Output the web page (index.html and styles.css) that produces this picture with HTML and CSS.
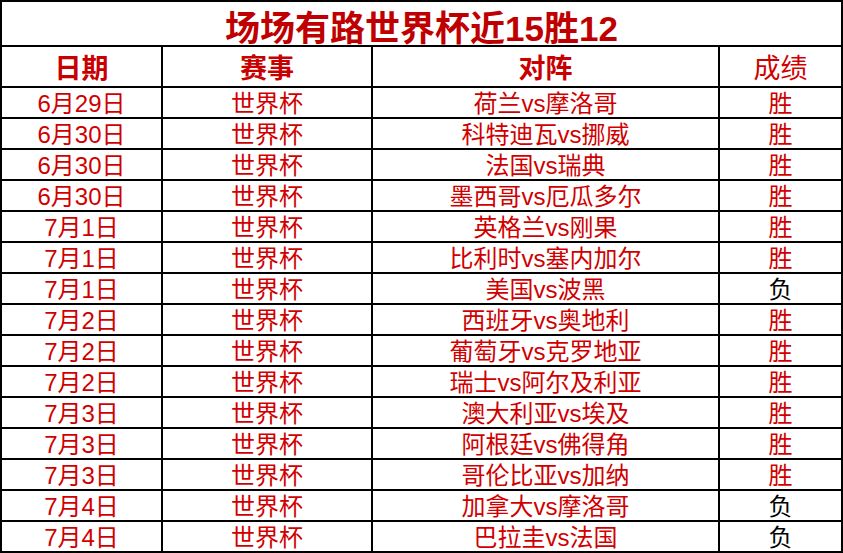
FILE: index.html
```html
<!DOCTYPE html>
<html lang="zh">
<head>
<meta charset="utf-8">
<title>场场有路世界杯近15胜12</title>
<link rel="stylesheet" href="styles.css">
</head>
<body>
<div class="sheet">
  <div class="cell title">场场有路世界杯近15胜12</div>

  <div class="cell head bold">日期</div>
  <div class="cell head bold">赛事</div>
  <div class="cell head bold">对阵</div>
  <div class="cell head">成绩</div>

  <div class="cell">6月29日</div><div class="cell">世界杯</div><div class="cell">荷兰vs摩洛哥</div><div class="cell">胜</div>
  <div class="cell">6月30日</div><div class="cell">世界杯</div><div class="cell">科特迪瓦vs挪威</div><div class="cell">胜</div>
  <div class="cell">6月30日</div><div class="cell">世界杯</div><div class="cell">法国vs瑞典</div><div class="cell">胜</div>
  <div class="cell">6月30日</div><div class="cell">世界杯</div><div class="cell">墨西哥vs厄瓜多尔</div><div class="cell">胜</div>
  <div class="cell">7月1日</div><div class="cell">世界杯</div><div class="cell">英格兰vs刚果</div><div class="cell">胜</div>
  <div class="cell">7月1日</div><div class="cell">世界杯</div><div class="cell">比利时vs塞内加尔</div><div class="cell">胜</div>
  <div class="cell">7月1日</div><div class="cell">世界杯</div><div class="cell">美国vs波黑</div><div class="cell lose">负</div>
  <div class="cell">7月2日</div><div class="cell">世界杯</div><div class="cell">西班牙vs奥地利</div><div class="cell">胜</div>
  <div class="cell">7月2日</div><div class="cell">世界杯</div><div class="cell">葡萄牙vs克罗地亚</div><div class="cell">胜</div>
  <div class="cell">7月2日</div><div class="cell">世界杯</div><div class="cell">瑞士vs阿尔及利亚</div><div class="cell">胜</div>
  <div class="cell">7月3日</div><div class="cell">世界杯</div><div class="cell">澳大利亚vs埃及</div><div class="cell">胜</div>
  <div class="cell">7月3日</div><div class="cell">世界杯</div><div class="cell">阿根廷vs佛得角</div><div class="cell">胜</div>
  <div class="cell">7月3日</div><div class="cell">世界杯</div><div class="cell">哥伦比亚vs加纳</div><div class="cell">胜</div>
  <div class="cell">7月4日</div><div class="cell">世界杯</div><div class="cell">加拿大vs摩洛哥</div><div class="cell lose">负</div>
  <div class="cell">7月4日</div><div class="cell">世界杯</div><div class="cell">巴拉圭vs法国</div><div class="cell lose">负</div>
</div>
</body>
</html>
```

FILE: styles.css
```css
* {
  box-sizing: border-box;
}

html, body {
  margin: 0;
  padding: 0;
  background: #ffffff;
}

body {
  width: 843px;
  height: 553px;
  overflow: hidden;
  font-family: "Liberation Sans", "Noto Sans CJK SC", sans-serif;
}

.sheet {
  display: grid;
  grid-template-columns: 161px 210px 347px 123px;
  grid-template-rows: 45px 41px repeat(15, 31px);
  border-left: 2px solid #000;
  border-top: 2px solid #000;
  width: 843px;
}

.cell {
  display: flex;
  align-items: center;
  justify-content: center;
  border-right: 2px solid #000;
  border-bottom: 2px solid #000;
  color: #d00000;
  font-size: 24px;
  line-height: 1;
  padding-top: 3px;
  white-space: nowrap;
}

.title {
  grid-column: 1 / -1;
  font-size: 35px;
  font-weight: bold;
  color: #c00000;
  padding-top: 9px;
}

.head {
  font-size: 27px;
  padding-top: 6px;
}

.head.bold {
  font-weight: bold;
  color: #c80000;
}

.lose {
  color: #000;
}
```
